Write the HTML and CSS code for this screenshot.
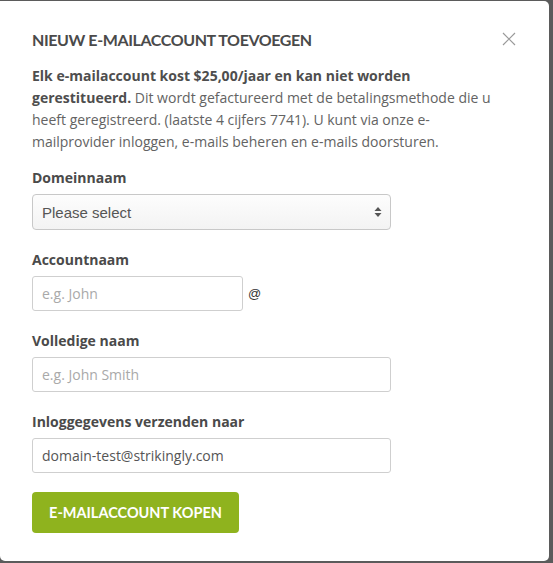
FILE: index.html
```html
<!DOCTYPE html>
<html lang="nl">
<head>
<meta charset="utf-8">
<title>Nieuw e-mailaccount toevoegen</title>
<link rel="stylesheet" href="styles.css">
</head>
<body>
<div class="backdrop">
  <div class="modal">
    <div class="modal-head">
      <h2 class="modal-title">NIEUW E-MAILACCOUNT TOEVOEGEN</h2>
      <button class="close" aria-label="Sluiten">
        <svg width="14" height="14" viewBox="0 0 14 14"><path d="M1 1L13 13M13 1L1 13" stroke="#9a9a9a" stroke-width="1.2" fill="none"/></svg>
      </button>
    </div>
    <p class="intro"><strong>Elk e-mailaccount kost $25,00/jaar en kan niet worden</strong> <strong>gerestitueerd.</strong> Dit wordt gefactureerd met de betalingsmethode die u heeft geregistreerd. (laatste 4 cijfers 7741). U kunt via onze e-mailprovider inloggen, e-mails beheren en e-mails doorsturen.</p>

    <div class="field">
      <label class="label">Domeinnaam</label>
      <div class="select">
        <span>Please select</span>
        <svg class="arrows" width="8" height="12" viewBox="0 0 8 12"><path d="M4 1L7.5 5H0.5Z" fill="#555"/><path d="M4 11L7.5 7H0.5Z" fill="#555"/></svg>
      </div>
    </div>

    <div class="field">
      <label class="label">Accountnaam</label>
      <div class="row">
        <input class="input short" placeholder="e.g. John">
        <span class="at">@</span>
      </div>
    </div>

    <div class="field">
      <label class="label">Volledige naam</label>
      <input class="input" placeholder="e.g. John Smith">
    </div>

    <div class="field">
      <label class="label">Inloggegevens verzenden naar</label>
      <input class="input" value="domain-test@strikingly.com">
    </div>

    <button class="buy">E-MAILACCOUNT KOPEN</button>
  </div>
</div>
</body>
</html>
```

FILE: styles.css
```css
* { box-sizing: border-box; }
html, body { margin: 0; padding: 0; }
body {
  background: #5b5b5b;
  font-family: "Open Sans", "Liberation Sans", sans-serif;
  width: 553px;
  height: 563px;
  overflow: hidden;
}
.backdrop {
  padding-top: 1px;
  padding-right: 4px;
  height: 563px;
}
.modal {
  background: #fff;
  width: 549px;
  height: 560px;
  border-radius: 0 5px 5px 5px;
  padding: 26px 32px 0 32px;
}
.modal-head {
  display: flex;
  justify-content: space-between;
  align-items: center;
  height: 24px;
}
.modal-title {
  margin: 0;
  font-family: "Lato", "Open Sans", sans-serif;
  font-weight: 700;
  font-size: 16px;
  letter-spacing: -0.4px;
  color: #4a4a4a;
}
.close {
  border: 0;
  background: none;
  padding: 0;
  width: 14px;
  height: 14px;
  margin-right: 1px;
  display: flex;
}
.intro {
  margin: 14px 0 0 0;
  font-size: 14px;
  line-height: 22px;
  color: #636363;
  width: 460px;
}
.intro strong { color: #4e4e4e; font-weight: 700; }
.field { margin-top: 15px; }
.field + .field { margin-top: 20px; }
.label {
  display: block;
  font-size: 14px;
  font-weight: 700;
  color: #4a4a4a;
  line-height: 20px;
  margin-bottom: 6px;
}
.select {
  width: 359px;
  height: 36px;
  border: 1px solid #c8c8c8;
  border-radius: 4px;
  background: linear-gradient(#fdfdfd, #f3f3f3);
  display: flex;
  align-items: center;
  justify-content: space-between;
  padding: 0 8px 0 9px;
  font-family: "Liberation Sans", Arial, sans-serif;
  font-size: 15px;
  color: #555;
}
.row { display: flex; align-items: center; gap: 5px; }
.input {
  display: block;
  width: 359px;
  height: 35px;
  border: 1px solid #cfcfcf;
  border-radius: 3px;
  padding: 0 9px;
  font-family: "Open Sans", sans-serif;
  font-size: 14px;
  color: #555;
  background: #fff;
  outline: none;
}
.input::placeholder { color: #a9a9a9; }
.input.short { width: 211px; }
.at {
  font-family: "Liberation Sans", Arial, sans-serif;
  font-size: 13px;
  color: #333;
}
.buy {
  display: block;
  margin-top: 19px;
  width: 207px;
  height: 41px;
  border: 0;
  border-radius: 4px;
  background: #8fb31e;
  color: #fff;
  font-family: "Lato", "Open Sans", sans-serif;
  font-weight: 700;
  font-size: 14.5px;
  padding: 0;
}
```
